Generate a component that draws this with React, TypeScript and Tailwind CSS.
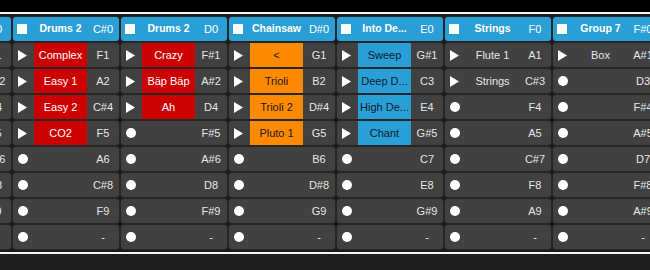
import React from "react";

type Clip = { kind: "play" | "dot"; name?: string; color?: "red" | "orange" | "blue"; note: string };
type Col = { name: string; note: string; clips: Clip[] };

const P = (name: string | undefined, note: string, color?: Clip["color"]): Clip => ({ kind: "play", name, note, color });
const D = (note: string): Clip => ({ kind: "dot", note });

const cols: Col[] = [
  { name: "", note: "C0", clips: [P("", "E1", "red"), P("", "G#2", "red"), P("", "C4", "red"), P("", "E5", "red"), D("G#6"), D("C8"), D("E9"), D("-")] },
  { name: "Drums 2", note: "C#0", clips: [P("Complex", "F1", "red"), P("Easy 1", "A2", "red"), P("Easy 2", "C#4", "red"), P("CO2", "F5", "red"), D("A6"), D("C#8"), D("F9"), D("-")] },
  { name: "Drums 2", note: "D0", clips: [P("Crazy", "F#1", "red"), P("Bäp Bäp", "A#2", "red"), P("Ah", "D4", "red"), D("F#5"), D("A#6"), D("D8"), D("F#9"), D("-")] },
  { name: "Chainsaw", note: "D#0", clips: [P("<", "G1", "orange"), P("Trioli", "B2", "orange"), P("Trioli 2", "D#4", "orange"), P("Pluto 1", "G5", "orange"), D("B6"), D("D#8"), D("G9"), D("-")] },
  { name: "Into De...", note: "E0", clips: [P("Sweep", "G#1", "blue"), P("Deep D...", "C3", "blue"), P("High De...", "E4", "blue"), P("Chant", "G#5", "blue"), D("C7"), D("E8"), D("G#9"), D("-")] },
  { name: "Strings", note: "F0", clips: [P("Flute 1", "A1"), P("Strings", "C#3"), D("F4"), D("A5"), D("C#7"), D("F8"), D("A9"), D("-")] },
  { name: "Group 7", note: "F#0", clips: [P("Box", "A#1"), D("D3"), D("F#4"), D("A#5"), D("D7"), D("F#8"), D("A#9"), D("-")] },
];

const blockClass: Record<string, string> = {
  red: "bg-[#cc0000] text-white",
  orange: "bg-[#ff8a00] text-[#1a1a1a]",
  blue: "bg-[#2a9fd6] text-[#102030]",
};

function Play() {
  return (
    <svg width="9" height="11" viewBox="0 0 9 11">
      <polygon points="0,0 9,5.5 0,11" fill="#ffffff" />
    </svg>
  );
}

function Cell({ clip }: { clip: Clip }) {
  const cls = clip.color ? blockClass[clip.color] : "text-[#e6e6e6]";
  return (
    <div className="h-[24px] bg-[#414141] rounded-[3px] flex items-stretch overflow-hidden shadow-[0_0_0_1px_#262626]">
      <div className="w-[21px] shrink-0 flex items-center pl-[5px]">
        {clip.kind === "play" ? <Play /> : <div className="w-[10px] h-[10px] rounded-full bg-white" />}
      </div>
      <div className={`w-[53px] shrink-0 flex items-center justify-center whitespace-nowrap overflow-hidden text-[11px] ${clip.kind === "play" ? cls : ""}`}>
        {clip.kind === "play" ? clip.name : ""}
      </div>
      <div className="flex-1 flex items-center justify-center text-[11px] text-[#e6e6e6] whitespace-nowrap">{clip.note}</div>
    </div>
  );
}

export default function App() {
  return (
    <div className="w-[650px] h-[270px] overflow-hidden bg-[#1e1e1e] font-['Liberation_Sans',Arial,sans-serif]">
      <div className="h-[12px] bg-black" />
      <div className="h-[2px] bg-[#f4f4f4]" />
      <div className="bg-[#1a1a1a] pt-[3px] pb-[3px] flex gap-[2px] ml-[-95px]">
        {cols.map((c, i) => (
          <div key={i} className="w-[106px] shrink-0 flex flex-col gap-[2px]">
            <div className="h-[24px] bg-[#2a9fd6] rounded-[3px] flex items-center text-white shadow-[0_0_0_1px_#262626]">
              <div className="w-[21px] shrink-0 pl-[4px] flex items-center">
                <div className="w-[10px] h-[10px] bg-white" />
              </div>
              <div className="w-[53px] shrink-0 text-center font-bold text-[10.5px] whitespace-nowrap overflow-hidden">{c.name}</div>
              <div className="flex-1 text-center text-[11px] whitespace-nowrap">{c.note}</div>
            </div>
            {c.clips.map((cl, j) => (
              <Cell key={j} clip={cl} />
            ))}
          </div>
        ))}
      </div>
      <div className="h-[2px] bg-[#f4f4f4]" />
    </div>
  );
}
